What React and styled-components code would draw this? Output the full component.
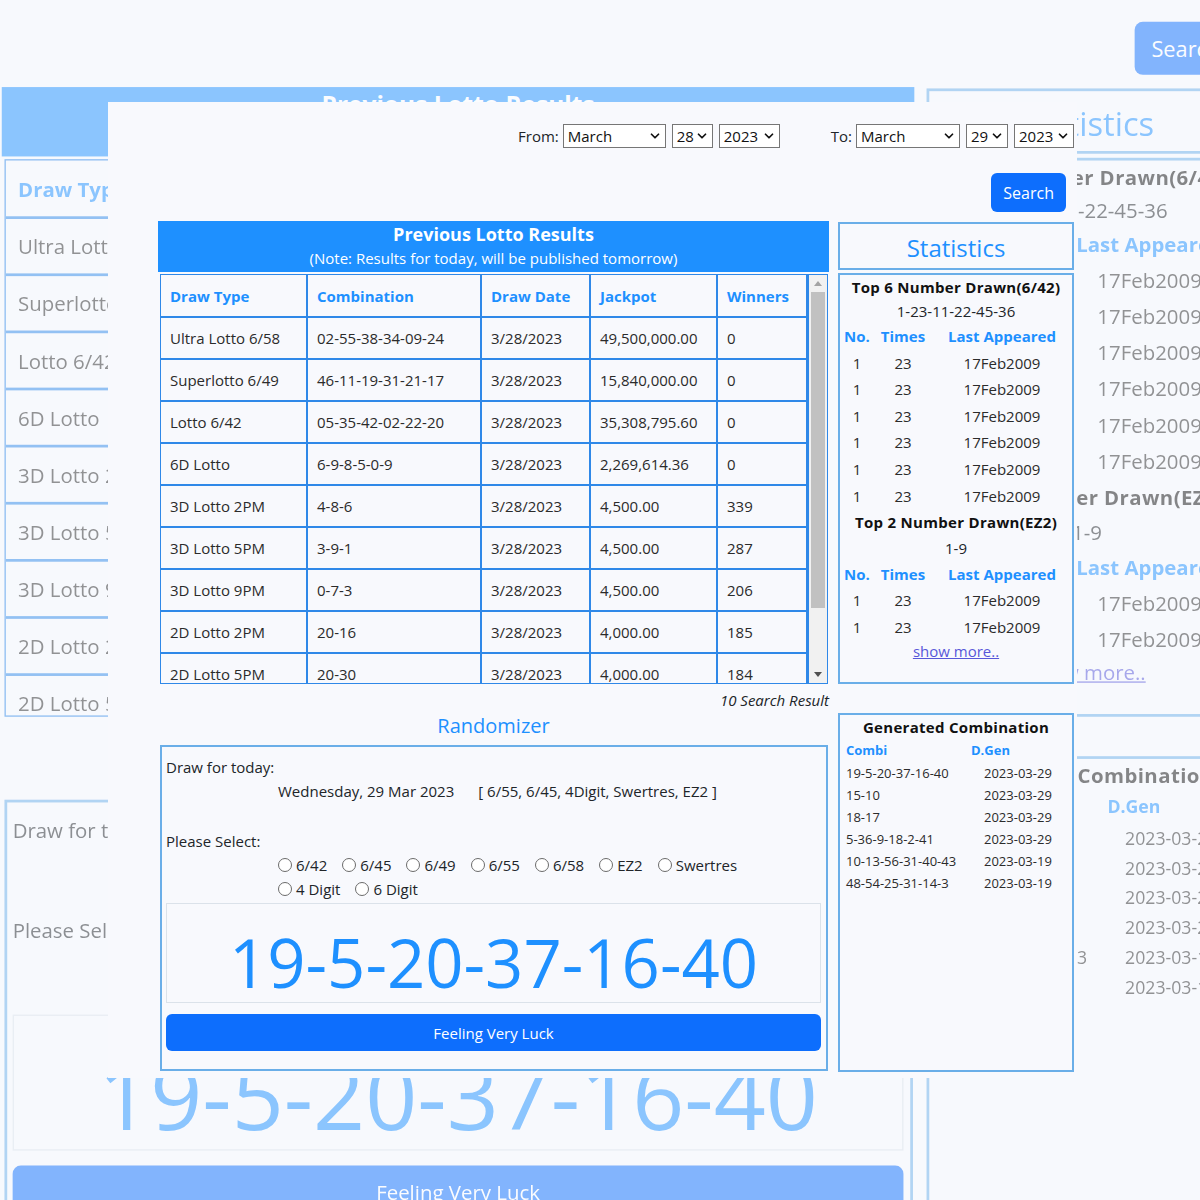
import React from "react";
import styled, { createGlobalStyle } from "styled-components";
import { ChevronDown } from "lucide-react";

const BLUE = "#1e90ff";
const LINE = "#2f88e8";
const SOFT = "#6aaee8";

const GlobalStyle = createGlobalStyle`
  html, body {
    margin: 0;
    padding: 0;
    background: #f7f9fd;
  }
  body {
    font-family: "Open Sans", "Noto Sans", sans-serif;
    color: #212529;
  }
`;

const results = [
  ["Ultra Lotto 6/58", "02-55-38-34-09-24", "3/28/2023", "49,500,000.00", "0"],
  ["Superlotto 6/49", "46-11-19-31-21-17", "3/28/2023", "15,840,000.00", "0"],
  ["Lotto 6/42", "05-35-42-02-22-20", "3/28/2023", "35,308,795.60", "0"],
  ["6D Lotto", "6-9-8-5-0-9", "3/28/2023", "2,269,614.36", "0"],
  ["3D Lotto 2PM", "4-8-6", "3/28/2023", "4,500.00", "339"],
  ["3D Lotto 5PM", "3-9-1", "3/28/2023", "4,500.00", "287"],
  ["3D Lotto 9PM", "0-7-3", "3/28/2023", "4,500.00", "206"],
  ["2D Lotto 2PM", "20-16", "3/28/2023", "4,000.00", "185"],
  ["2D Lotto 5PM", "20-30", "3/28/2023", "4,000.00", "184"],
  ["2D Lotto 9PM", "11-05", "3/28/2023", "4,000.00", "190"],
];

const generated = [
  ["19-5-20-37-16-40", "2023-03-29"],
  ["15-10", "2023-03-29"],
  ["18-17", "2023-03-29"],
  ["5-36-9-18-2-41", "2023-03-29"],
  ["10-13-56-31-40-43", "2023-03-19"],
  ["48-54-25-31-14-3", "2023-03-19"],
];

const picks = [
  ["6/42", "6/45", "6/49", "6/55", "6/58", "EZ2", "Swertres"],
  ["4 Digit", "6 Digit"],
];

const Stage = styled.div`
  display: grid;
  width: 1200px;
  height: 1200px;
  overflow: hidden;
  background: #f7f9fd;
`;

// zoomed copy of the page sitting behind the window
const Backdrop = styled.div`
  grid-area: 1 / 1;
  transform: scale(1.36);
  transform-origin: 592px 593px;
  opacity: 0.5;
`;

const Front = styled.div`
  grid-area: 1 / 1;
  background: #f8f9fd;
  clip-path: inset(102px 123px 122px 108px);
`;

const PageBody = styled.div`
  width: 917px;
  padding: 124px 0 0 158px;
`;

const DateBar = styled.div`
  display: flex;
  justify-content: flex-end;
  align-items: center;
  gap: 51px;
  height: 24px;
  padding-right: 1px;
`;

const DateGroup = styled.div`
  display: flex;
  align-items: center;
  gap: 6px;
  font-size: 15px;
  span {
    margin-right: -2px;
  }
`;

const SelectBox = styled.div`
  display: flex;
  align-items: center;
  justify-content: space-between;
  box-sizing: border-box;
  width: ${(p) => p.$w}px;
  height: 24px;
  padding: 0 3px 0 4px;
  border: 1px solid #767676;
  background: #fff;
  font-size: 15px;
  color: #111;
`;

const SearchRow = styled.div`
  display: flex;
  justify-content: flex-end;
  padding-right: 9px;
  margin-top: 25px;
`;

const SearchButton = styled.button`
  height: 39px;
  padding: 0 12px;
  border: 0;
  border-radius: 6px;
  background: #0d6efd;
  color: #fff;
  font-family: inherit;
  font-size: 16px;
`;

const Main = styled.div`
  display: grid;
  grid-template-columns: 671px 236px;
  column-gap: 9px;
  margin-top: 9px;
  align-items: start;
`;

const Column = styled.div`
  display: flex;
  flex-direction: column;
`;

const ResultsHead = styled.div`
  height: 51px;
  box-sizing: border-box;
  padding-top: 1px;
  background: ${BLUE};
  color: #fff;
  text-align: center;
  line-height: 24px;
  h2 {
    margin: 0;
    font-size: 18px;
    font-weight: 700;
  }
  p {
    margin: 0;
    font-size: 15px;
  }
`;

const TableFrame = styled.div`
  display: flex;
  box-sizing: border-box;
  height: 410px;
  margin: 2px 1px 0 2px;
  border: 1px solid ${LINE};
`;

const TableClip = styled.div`
  flex: 1;
  overflow: hidden;
`;

const ResultTable = styled.table`
  width: 100%;
  border-collapse: collapse;
  font-size: 15px;
  th,
  td {
    border: 2px solid ${LINE};
    padding: 0 9px;
    text-align: left;
    white-space: nowrap;
  }
  tr:first-child th {
    border-top: 0;
  }
  tr th:first-child,
  tr td:first-child {
    border-left: 0;
  }
  th {
    height: 41px;
    color: ${BLUE};
    font-weight: 700;
  }
  td {
    height: 40px;
    color: #2b2b2b;
  }
`;

const ScrollBar = styled.div`
  display: flex;
  flex-direction: column;
  width: 18px;
  background: #f1f1f1;
  border-left: 1px solid ${LINE};
`;

const ScrollArrow = styled.div`
  display: flex;
  align-items: center;
  justify-content: center;
  height: 17px;
  &::after {
    content: "";
    border-left: 4px solid transparent;
    border-right: 4px solid transparent;
    ${(p) =>
      p.$down
        ? "border-top: 5px solid #505050;"
        : "border-bottom: 5px solid #a3a3a3;"}
  }
`;

const ScrollTrack = styled.div`
  flex: 1;
  padding: 0 2px;
`;

const ScrollThumb = styled.div`
  height: 316px;
  background: #c1c1c1;
`;

const ResultCount = styled.div`
  margin-top: 6px;
  font-size: 15px;
  font-style: italic;
  line-height: 20px;
  text-align: right;
`;

const SectionTitle = styled.div`
  margin-top: 4px;
  color: ${BLUE};
  font-size: 20px;
  line-height: 24px;
  text-align: center;
`;

const RandomBox = styled.div`
  box-sizing: border-box;
  height: 326px;
  margin: 7px 1px 0 2px;
  padding: 8px 5px 0 4px;
  border: 2px solid ${SOFT};
  font-size: 15px;
  line-height: 24px;
`;

const Line = styled.div`
  padding-left: ${(p) => p.$indent || 0}px;
  margin-top: ${(p) => p.$mt || 0}px;
`;

const Tag = styled.span`
  margin-left: 24px;
`;

const RadioRow = styled.div`
  display: flex;
  align-items: center;
  gap: 15px;
  padding-left: 112px;
`;

const RadioItem = styled.label`
  display: inline-flex;
  align-items: center;
  gap: 4px;
`;

const RadioDot = styled.span`
  width: 12px;
  height: 12px;
  border: 1px solid #6b6b6b;
  border-radius: 50%;
  background: #fff;
`;

const NumberBox = styled.div`
  display: flex;
  align-items: center;
  justify-content: center;
  box-sizing: border-box;
  height: 100px;
  margin-top: 2px;
  padding-top: 18px;
  border: 1px solid #dbe2ea;
  color: ${BLUE};
  font-size: 67px;
`;

const LuckButton = styled.button`
  display: block;
  width: 100%;
  height: 37px;
  margin-top: 11px;
  border: 0;
  border-radius: 6px;
  background: #0d6efd;
  color: #fff;
  font-family: inherit;
  font-size: 15px;
`;

const Panel = styled.div`
  box-sizing: border-box;
  height: ${(p) => p.$h}px;
  margin-top: ${(p) => p.$mt}px;
  border: 2px solid ${SOFT};
  text-align: center;
`;

const PanelTitle = styled.div`
  color: ${BLUE};
  font-size: 24px;
  line-height: 47px;
`;

const BoldLine = styled.div`
  font-size: 15px;
  font-weight: 700;
  line-height: ${(p) => p.$lh || 26.5}px;
  color: #111;
  letter-spacing: ${(p) => (p.$wide ? 0.3 : 0)}px;
`;

const PlainLine = styled.div`
  font-size: 15px;
  line-height: ${(p) => p.$lh || 26.5}px;
`;

const StatTable = styled.table`
  width: 100%;
  border-collapse: collapse;
  font-size: 15px;
  line-height: 26.6px;
  th {
    padding: 0;
    color: ${BLUE};
    font-weight: 700;
  }
  td {
    padding: 0;
    text-align: center;
    color: #2b2b2b;
  }
`;

const MoreLink = styled.a`
  display: block;
  color: #5757d9;
  font-size: 15px;
  line-height: 22px;
  text-decoration: underline;
`;

const GenTable = styled.table`
  width: 100%;
  border-collapse: collapse;
  margin-left: 6px;
  font-size: 13px;
  text-align: left;
  th {
    padding: 0;
    line-height: 23px;
    color: ${BLUE};
    font-weight: 700;
  }
  td {
    padding: 0;
    line-height: 22px;
    color: #2b2b2b;
  }
  td + td {
    padding-left: 13px;
  }
`;

const Select = ({ value, w }) => (
  <SelectBox $w={w}>
    <span>{value}</span>
    <ChevronDown size={14} strokeWidth={3} />
  </SelectBox>
);

const StatBlock = ({ title, combo, rows, first }) => (
  <>
    <BoldLine $lh={first ? 24 : 26.5} $wide>
      {title}
    </BoldLine>
    <PlainLine $lh={first ? 24 : 25}>{combo}</PlainLine>
    <StatTable>
      <colgroup>
        <col style={{ width: 34 }} />
        <col style={{ width: 58 }} />
        <col />
      </colgroup>
      <tbody>
        <tr>
          <th>No.</th>
          <th>Times</th>
          <th>Last Appeared</th>
        </tr>
        {Array.from({ length: rows }).map((_, i) => (
          <tr key={i}>
            <td>1</td>
            <td>23</td>
            <td>17Feb2009</td>
          </tr>
        ))}
      </tbody>
    </StatTable>
  </>
);

const Page = () => (
  <PageBody>
    <DateBar>
      <DateGroup>
        <span>From:</span>
        <Select value="March" w={103} />
        <Select value="28" w={41} />
        <Select value="2023" w={61} />
      </DateGroup>
      <DateGroup>
        <span>To:</span>
        <Select value="March" w={104} />
        <Select value="29" w={42} />
        <Select value="2023" w={60} />
      </DateGroup>
    </DateBar>

    <SearchRow>
      <SearchButton>Search</SearchButton>
    </SearchRow>

    <Main>
      <Column>
        <ResultsHead>
          <h2>Previous Lotto Results</h2>
          <p>(Note: Results for today, will be published tomorrow)</p>
        </ResultsHead>
        <TableFrame>
          <TableClip>
            <ResultTable>
              <colgroup>
                <col style={{ width: 146 }} />
                <col style={{ width: 174 }} />
                <col style={{ width: 109 }} />
                <col style={{ width: 127 }} />
                <col />
              </colgroup>
              <tbody>
                <tr>
                  <th>Draw Type</th>
                  <th>Combination</th>
                  <th>Draw Date</th>
                  <th>Jackpot</th>
                  <th>Winners</th>
                </tr>
                {results.map((r) => (
                  <tr key={r[0]}>
                    {r.map((c, i) => (
                      <td key={i}>{c}</td>
                    ))}
                  </tr>
                ))}
              </tbody>
            </ResultTable>
          </TableClip>
          <ScrollBar>
            <ScrollArrow />
            <ScrollTrack>
              <ScrollThumb />
            </ScrollTrack>
            <ScrollArrow $down />
          </ScrollBar>
        </TableFrame>
        <ResultCount>10 Search Result</ResultCount>

        <SectionTitle>Randomizer</SectionTitle>
        <RandomBox>
          <Line>Draw for today:</Line>
          <Line $indent={112}>
            Wednesday, 29 Mar 2023<Tag>[ 6/55, 6/45, 4Digit, Swertres, EZ2 ]</Tag>
          </Line>
          <Line $mt={26}>Please Select:</Line>
          {picks.map((row, i) => (
            <RadioRow key={i}>
              {row.map((p) => (
                <RadioItem key={p}>
                  <RadioDot />
                  {p}
                </RadioItem>
              ))}
            </RadioRow>
          ))}
          <NumberBox>19-5-20-37-16-40</NumberBox>
          <LuckButton>Feeling Very Luck</LuckButton>
        </RandomBox>
      </Column>

      <Column>
        <Panel $h={48} $mt={1}>
          <PanelTitle>Statistics</PanelTitle>
        </Panel>
        <Panel $h={411} $mt={3}>
          <StatBlock title="Top 6 Number Drawn(6/42)" combo="1-23-11-22-45-36" rows={6} first />
          <StatBlock title="Top 2 Number Drawn(EZ2)" combo="1-9" rows={2} />
          <MoreLink>show more..</MoreLink>
        </Panel>
        <Panel $h={359} $mt={29}>
          <BoldLine $lh={24} $wide>
            Generated Combination
          </BoldLine>
          <GenTable>
            <colgroup>
              <col style={{ width: 125 }} />
              <col />
            </colgroup>
            <tbody>
              <tr>
                <th>Combi</th>
                <th>D.Gen</th>
              </tr>
              {generated.map((g) => (
                <tr key={g[0]}>
                  <td>{g[0]}</td>
                  <td>{g[1]}</td>
                </tr>
              ))}
            </tbody>
          </GenTable>
        </Panel>
      </Column>
    </Main>
  </PageBody>
);

const App = () => (
  <>
    <GlobalStyle />
    <Stage>
      <Backdrop>
        <Page />
      </Backdrop>
      <Front>
        <Page />
      </Front>
    </Stage>
  </>
);

export default App;
